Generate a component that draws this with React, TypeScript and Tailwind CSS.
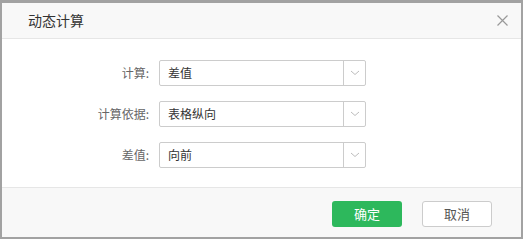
import React from "react";

const font = { fontFamily: '"Noto Sans CJK SC", "Noto Sans", sans-serif' };

function Chevron() {
  return (
    <svg width="10" height="6" viewBox="0 0 10 6" fill="none">
      <path d="M1 1 L5 4.5 L9 1" stroke="#bdbdbd" strokeWidth="1" />
    </svg>
  );
}

function Row({ label, value }: { label: string; value: string }) {
  return (
    <div className="flex items-center h-[26px]">
      <div className="w-[157px] pr-[10px] text-right text-[12px] text-[#666]">{label}</div>
      <div className="flex w-[207px] h-[26px] border border-[#cccccc] rounded-[2px] bg-white">
        <div className="flex-1 flex items-center pl-[8px] text-[12px] text-[#333]">{value}</div>
        <div className="w-[22px] border-l border-[#cccccc] flex items-center justify-center">
          <Chevron />
        </div>
      </div>
    </div>
  );
}

export default function App() {
  return (
    <div className="w-[523px] h-[239px] bg-[#a2a2a2] pt-[3px] pl-[2px] pr-[2px] pb-[2px]" style={font}>
      <div className="w-[519px] h-[234px] bg-white flex flex-col">
        <div className="h-[36px] bg-[#f8f8f8] border-b border-[#e6e6e6] flex items-center justify-between pl-[26px] pr-[13px]">
          <span className="text-[14px] text-[#333]">动态计算</span>
          <svg width="11" height="11" viewBox="0 0 11 11">
            <path d="M0.5 0.5 L10.5 10.5 M10.5 0.5 L0.5 10.5" stroke="#999" strokeWidth="1.2" />
          </svg>
        </div>
        <div className="h-[148px] flex flex-col gap-[15px] pt-[21px]">
          <Row label="计算:" value="差值" />
          <Row label="计算依据:" value="表格纵向" />
          <Row label="差值:" value="向前" />
        </div>
        <div className="flex-1 bg-[#f8f8f8] border-t border-[#e6e6e6] flex justify-end items-start pt-[13px] pr-[29px] gap-[20px]">
          <button className="w-[70px] h-[26px] rounded-[3px] bg-[#2db85c] text-white text-[13px]">确定</button>
          <button className="w-[70px] h-[26px] rounded-[3px] bg-white border border-[#cccccc] text-[#555] text-[13px]">取消</button>
        </div>
      </div>
    </div>
  );
}
